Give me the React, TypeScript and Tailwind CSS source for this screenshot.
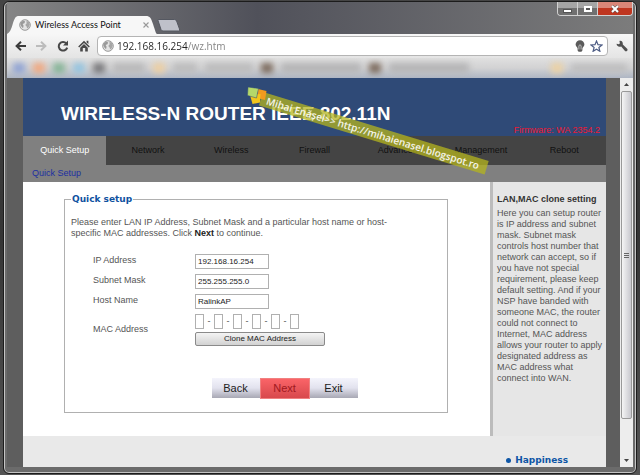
import { useState } from "react";

const navItems = [
  "Quick Setup",
  "Network",
  "Wireless",
  "Firewall",
  "Advanced",
  "Management",
  "Reboot",
];

const bookmarks = [
  "bg-[#8fa3d4] w-3",
  "bg-[#f0a880] w-3",
  "bg-[#84b496] w-3",
  "bg-[#94c4e0] w-3",
  "bg-[#77777a] w-3",
  "bg-[#b9b9ba] w-8",
  "bg-[#edcfa3] w-3",
  "bg-[#bcbcbd] w-6",
  "bg-[#bcbcbd] w-12",
  "bg-[#7b6a5c] w-3",
  "bg-[#b5b5b6] w-20",
  "bg-[#7b6a5c] w-3",
  "bg-[#b5b5b6] w-20",
];

function Globe({ className }) {
  return (
    <svg viewBox="0 0 12 12" className={className} aria-hidden="true">
      <circle cx="6" cy="6" r="5.3" fill="#e4e4e4" stroke="#8f8f8f" strokeWidth="0.9" />
      <path d="M2 3.2 4.2 1.6 6.2 2.4 5.4 4.2 3.6 5 4.6 6.8 4 9.2 2.4 7.6 1.2 5Z" fill="#999" />
      <path d="M7.4 1.4 9.8 3 10.8 5.4 9.6 8.4 8.2 9.6 7.6 7.4 6.2 6 7.6 4.4Z" fill="#a6a6a6" />
    </svg>
  );
}

function TitleBar() {
  return (
    <div className="relative flex h-8 items-end bg-linear-to-r from-[#858585] via-[#50515a] via-40% to-[#7c7c7c]">
      <div className="relative flex h-[18px] w-[150px] items-center pl-3">
        <svg viewBox="0 0 150 18" className="absolute inset-0 h-full w-full" aria-hidden="true">
          <path d="M0 18C3 16 4 14 6 7 8 1 9 0 12 0H139C143 0 144 2 146 8 148 14 149 18 150 18Z" fill="#f7f7f7" />
        </svg>
        <Globe className="relative h-3 w-3" />
        <span className="relative ml-1 font-[Lato,sans-serif] text-[9px] leading-4 text-[#111]">
          Wireless Access Point
        </span>
        <button aria-label="Close tab" className="relative mr-2 ml-auto">
          <svg viewBox="0 0 6 6" className="h-[6px] w-[6px]">
            <path d="M0.5 0.5 5.5 5.5M5.5 0.5 0.5 5.5" stroke="#999" strokeWidth="1.1" />
          </svg>
        </button>
      </div>
      <button aria-label="New tab" className="mb-[2px] flex">
        <svg viewBox="0 0 24 13" className="h-[13px] w-6">
          <path d="M1 1.5Q0.5 0.5 2 0.5H17.5Q19 0.5 19.6 2L22.5 10Q23.2 12 21.5 12H6Q4.5 12 4 10.5Z" fill="#bfc1ca" stroke="#555861" />
        </svg>
      </button>
      <div className="absolute top-0 right-0 flex h-[14px] overflow-hidden rounded-b border border-t-0 border-[#d2d2d2]">
        <button
          aria-label="Minimize"
          className="flex w-5 items-center justify-center border-r border-[#d2d2d2] bg-linear-to-b from-[#a5a5a5] from-50% to-[#707070] to-50%"
        >
          <span className="mt-1 h-1 w-[9px] border border-[#555] bg-white" />
        </button>
        <button
          aria-label="Maximize"
          className="flex w-5 items-center justify-center border-r border-[#d2d2d2] bg-linear-to-b from-[#a5a5a5] from-50% to-[#707070] to-50%"
        >
          <span className="h-[6px] w-2 border-2 border-white bg-[#555]" />
        </button>
        <button
          aria-label="Close"
          className="flex w-[34px] items-center justify-center bg-linear-to-b from-[#d98678] from-50% to-[#bf3620] to-50%"
        >
          <svg viewBox="0 0 8 8" className="h-2 w-2">
            <path d="M1 1 7 7M7 1 1 7" stroke="#555" strokeWidth="3" />
            <path d="M1 1 7 7M7 1 1 7" stroke="#fff" strokeWidth="2" />
          </svg>
        </button>
      </div>
    </div>
  );
}

function Toolbar() {
  return (
    <div className="flex h-6 items-center bg-linear-to-b from-[#f7f7f7] to-[#e4e4e4] pr-[5px] pl-2">
      <button aria-label="Back">
        <svg viewBox="0 0 11 10" className="h-[10px] w-[11px]">
          <path d="M11 5H2M6 0.8 1.6 5 6 9.2" fill="none" stroke="#3c3c3c" strokeWidth="2" />
        </svg>
      </button>
      <button aria-label="Forward" className="ml-[10px]">
        <svg viewBox="0 0 11 10" className="h-[10px] w-[11px]">
          <path d="M0 5H9M5 0.8 9.4 5 5 9.2" fill="none" stroke="#bcbcbc" strokeWidth="2" />
        </svg>
      </button>
      <button aria-label="Reload" className="ml-[10px]">
        <svg viewBox="0 0 12 12" className="h-3 w-3">
          <path d="M9.3 3.4A4.3 4.3 0 1 0 10.2 7.6" fill="none" stroke="#484848" strokeWidth="2" />
          <path d="M11 0.5V5.5H6Z" fill="#484848" />
        </svg>
      </button>
      <button aria-label="Home" className="ml-[9px]">
        <svg viewBox="0 0 12 12" className="h-3 w-3">
          <path d="M6 0.8 11.8 6.6 10.8 7.6 6 2.9 1.2 7.6 0.2 6.6ZM8.6 0.8H10.4V4L8.6 2.4ZM2.2 7.8 6 4.1 9.8 7.8V11.5H7.2V8H4.8V11.5H2.2Z" fill="#484848" />
        </svg>
      </button>
      <div className="ml-[7px] flex h-5 grow items-center rounded-sm border border-[#b4b4b4] bg-white pr-1 pl-1">
        <Globe className="h-3 w-3 shrink-0" />
        <label htmlFor="address" className="sr-only">Address</label>
        <input
          id="address"
          defaultValue="192.168.16.254/wz.htm"
          className="ml-[3px] h-[18px] grow bg-linear-to-r from-[#222] from-[71px] to-[#808080] to-[71px] bg-clip-text font-['Open_Sans',sans-serif] text-[10px] text-transparent caret-black outline-none"
        />
        <svg viewBox="0 0 10 12" className="h-3 w-[10px]" aria-hidden="true">
          <path d="M5 0.2A4.4 4.4 0 0 1 9.4 4.6C9.4 6.2 8 7 7.4 8.4V10.6L6.4 11.8H3.6L2.6 10.6V8.4C2 7 0.6 6.2 0.6 4.6A4.4 4.4 0 0 1 5 0.2Z" fill="#5b5b5b" />
          <path d="M3.9 9.5V5.6Q5 4 6.1 5.6V9.5" fill="none" stroke="#d6d6d6" strokeWidth="0.8" />
        </svg>
        <button aria-label="Bookmark this page" className="ml-[5px]">
          <svg viewBox="0 0 13 12" className="h-3 w-[13px]">
            <path d="M6.5 1 8 4.7 12 5 8.9 7.5 9.9 11.3 6.5 9.2 3.1 11.3 4.1 7.5 1 5 5 4.7Z" fill="#fff" stroke="#4e5d85" strokeWidth="1.2" />
          </svg>
        </button>
      </div>
      <button aria-label="Settings" className="ml-2">
        <svg viewBox="0 0 12 12" className="h-3 w-3">
          <path d="M0.6 3.8 3 4.2 3.9 3.2 3.4 0.9C5.4 0.2 7.2 1.8 6.8 4.4L11.4 8.9C12 10.4 10.6 11.8 9.2 11.2L5.2 6.4C2.8 7.4 0.5 6 0.6 3.8Z" fill="#505050" />
        </svg>
      </button>
    </div>
  );
}

function Bookmarks() {
  return (
    <div className="flex h-5 items-center overflow-hidden bg-linear-to-b from-[#e0e0e0] via-[#d2d2d3] to-[#aeb6c4]">
      <div className="flex grow items-center gap-2 px-[6px] blur-[3px]">
        {bookmarks.map((item, index) => (
          <span key={index} className={`h-[10px] ${item}`} />
        ))}
        <span className="ml-auto h-[10px] w-3 bg-[#ecd2a4]" />
        <span className="h-2 w-14 bg-[#bcbcbd]" />
      </div>
    </div>
  );
}

function Watermark() {
  return (
    <div className="pointer-events-none absolute top-2 left-[224px]">
      <div className="absolute top-[6px] left-4 flex h-[14px] w-[236px] origin-top-left rotate-[17deg] items-center bg-[#b4b41e]/75 pl-[6px]">
        <span className="font-['Open_Sans',sans-serif] text-[10px] leading-none font-semibold whitespace-nowrap text-white/90">
          Mihai Enășel&gt;&gt; http://mihaienasel.blogspot.ro
        </span>
      </div>
      <svg viewBox="0 0 20 18" className="relative h-[18px] w-5" aria-hidden="true">
        <path d="M11 3 19.5 5 18 14 10 12Z" fill="#f29a1f" />
        <path d="M3 9 13.5 8 13 16.5 5.5 18Z" fill="#f2c51c" />
        <path d="M1 1 11.5 2.5 9.5 12 0.5 9.5Z" fill="#b5d86a" stroke="#2f4a77" strokeWidth="0.5" />
      </svg>
    </div>
  );
}

function Field({ id, label, value }) {
  return (
    <div className="flex h-5 items-center">
      <label htmlFor={id} className="w-[102px]">{label}</label>
      <input
        id={id}
        defaultValue={value}
        className="h-[15px] w-[74px] border border-[#b0b0b0] bg-white px-[2px] text-[8px] text-[#222]"
      />
    </div>
  );
}

function QuickSetup() {
  const [mac, setMac] = useState(["", "", "", "", "", ""]);

  const handleMacChange = (index, value) => {
    setMac((prevMac) => prevMac.map((part, i) => (i === index ? value : part)));
  };

  return (
    <form
      className="grow bg-white pt-[10px] pr-[42px] pb-[22px] pl-[41px]"
      onSubmit={(e) => e.preventDefault()}
    >
      <fieldset className="border border-[#b0b0b0] px-[6px] pb-[13px]">
        <legend className="px-px font-['DejaVu_Sans',Verdana,sans-serif] text-[9px] leading-[14px] font-bold text-[#10529f]">
          Quick setup
        </legend>
        <p className="mt-[11px] pr-[50px] text-[9px] leading-[11px]">
          Please enter LAN IP Address, Subnet Mask and a particular host name or host-specific MAC
          addresses. Click <b className="text-[#222]">Next</b> to continue.
        </p>
        <div className="mt-3 pl-[22px] text-[9px]">
          <Field id="ip" label="IP Address" value="192.168.16.254" />
          <Field id="mask" label="Subnet Mask" value="255.255.255.0" />
          <Field id="host" label="Host Name" value="RalinkAP" />
          <div className="mt-[3px] flex items-center">
            <span className="w-[102px]">MAC Address</span>
            <div>
              <div className="flex items-center">
                {mac.map((part, index) => (
                  <div key={index} className="flex items-center">
                    {index > 0 && <span className="w-[10px] text-center">-</span>}
                    <input
                      aria-label={`MAC Address ${index + 1}`}
                      value={part}
                      maxLength={2}
                      onChange={(e) => handleMacChange(index, e.target.value)}
                      className="h-[15px] w-[9px] border border-[#b0b0b0] bg-white"
                    />
                  </div>
                ))}
              </div>
              <button
                type="button"
                className="mt-[3px] h-[14px] w-[130px] rounded-xs border border-[#8a8a8a] bg-linear-to-b from-[#f4f4f4] to-[#d2d2d2] text-[8px] leading-3 text-[#222]"
              >
                Clone MAC Address
              </button>
            </div>
          </div>
        </div>
        <div className="mt-8 flex justify-center pl-[57px] text-[11px] text-[#222]">
          <button type="button" className="h-5 w-12 bg-linear-to-b from-[#f4f4fc] via-[#e2e2ee] to-[#a8a8b4]">
            Back
          </button>
          <button type="submit" className="h-[21px] w-[50px] border border-[#f08080] bg-linear-to-b from-[#fa6468] to-[#d8484c] text-[#a01820]">
            Next
          </button>
          <button type="button" className="h-5 w-12 bg-linear-to-b from-[#f4f4fc] via-[#e2e2ee] to-[#a8a8b4]">
            Exit
          </button>
        </div>
      </fieldset>
    </form>
  );
}

function ScrollBar() {
  return (
    <div className="flex w-[13px] flex-col items-center bg-[#ededed]">
      <svg viewBox="0 0 13 13" className="h-[13px] w-[13px]" aria-hidden="true">
        <path d="M4 8 6.5 5 9 8Z" fill="#444" />
      </svg>
      <div className="flex w-[11px] grow flex-col items-center justify-center gap-px rounded-xs border border-[#999] bg-linear-to-r from-[#f5f5f5] to-[#c8c8ce]">
        <span className="h-px w-[5px] bg-[#666]" />
        <span className="h-px w-[5px] bg-[#666]" />
        <span className="h-px w-[5px] bg-[#666]" />
      </div>
      <svg viewBox="0 0 13 13" className="mt-[35px] h-[13px] w-[13px]" aria-hidden="true">
        <path d="M4 5 6.5 8 9 5Z" fill="#444" />
      </svg>
    </div>
  );
}

function App() {
  const [active, setActive] = useState("Quick Setup");

  return (
    <div className="flex min-h-screen flex-col bg-linear-to-b from-[#454545] via-[#353535] to-[#555] px-[3px] pt-px pb-px font-['Liberation_Sans',Arial,sans-serif]">
      <div className="flex grow flex-col rounded-md border border-[#1c1c1c] bg-[#6b6b6b] shadow-[inset_0_0_0_1px_#c4c4c4]">
        <div className="px-[3px]">
          <TitleBar />
          <Toolbar />
          <Bookmarks />
        </div>
        <div className="mx-[3px] mb-[6px] flex grow bg-[#5e5e5e]">
          <div className="flex grow flex-col pr-[14px] pl-4 text-[9px] text-[#555]">
            <header className="relative z-10 flex h-[58px] items-end justify-between bg-[#2f4a77] pr-[6px] pl-[38px]">
              <h1 className="pb-[10px] text-[19px] leading-6 font-bold whitespace-nowrap text-white">
                WIRELESS-N ROUTER IEEE 802.11N
              </h1>
              <p className="leading-[11px] whitespace-nowrap text-[#ee1834]">Firmware: WA 2354.2</p>
              <Watermark />
            </header>
            <nav className="grid h-[29px] grid-cols-7 bg-[#444]">
              {navItems.map((item) => (
                <button
                  key={item}
                  onClick={() => setActive(item)}
                  className={
                    active === item ? "bg-[#808080] text-white" : "text-[#111]"
                  }
                >
                  {item}
                </button>
              ))}
            </nav>
            <div className="flex h-[17px] items-center bg-[#808080] pl-[9px]">
              <a href="#quick-setup" className="text-[#1c2fa0]">{active}</a>
            </div>
            <div className="flex grow">
              <QuickSetup />
              <aside className="w-[116px] shrink-0 border-l-3 border-[#bcbcbc] bg-[#e6e6e6] pt-3 pl-1">
                <h2 className="leading-[11px] font-bold text-[#333]">LAN,MAC clone setting</h2>
                <p className="mt-[3px] leading-[11px]">
                  Here you can setup router is IP address and subnet mask. Subnet mask controls host
                  number that network can accept, so if you have not special requirement, please
                  keep default setting. And if your NSP have banded with someone MAC, the router
                  could not connect to Internet, MAC address allows your router to apply designated
                  address as MAC address what connect into WAN.
                </p>
              </aside>
            </div>
            <footer className="flex h-[31px] items-end justify-end bg-[#e9e9e9] pr-[38px]">
              <a href="#happiness" className="flex items-center gap-1 font-['DejaVu_Sans',Verdana,sans-serif] text-[9px] leading-[14px] font-bold text-[#0e56a6]">
                <span className="h-[5px] w-[5px] rounded-full bg-[#0e56a6]" />
                Happiness
              </a>
            </footer>
          </div>
          <ScrollBar />
        </div>
      </div>
    </div>
  );
}

export default App;
